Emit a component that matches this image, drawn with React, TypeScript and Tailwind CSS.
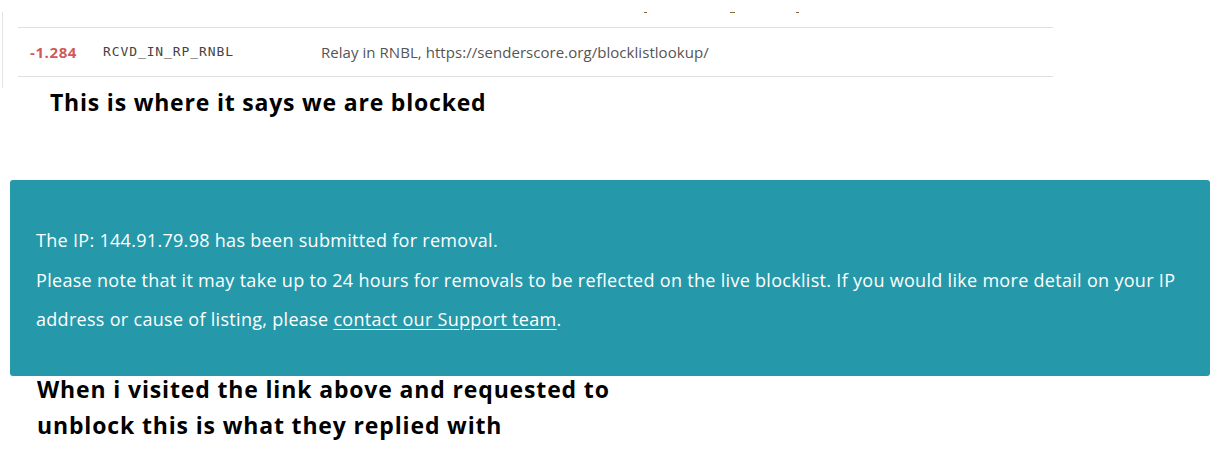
import React from "react";

export default function App() {
  return (
    <div className="w-[1227px] h-[467px] bg-white overflow-hidden relative">
      {/* top table fragment */}
      <div className="ml-[2px] mt-[12px] h-[76px] border-l border-[#e3e3e3] pl-[15px]">
        <div className="relative h-[15px] w-[1035px]">
          <span className="absolute left-[626px] top-0 h-px w-[3px] bg-[#8a6a3a]" />
          <span className="absolute left-[712px] top-0 h-px w-[5px] bg-[#8a6a3a]" />
          <span className="absolute left-[778px] top-0 h-px w-[3px] bg-[#8a6a3a]" />
        </div>
        <div className="w-[1035px] h-[50px] border-t border-b border-[#e0e0e0] flex items-center">
          <span className="w-[85px] pl-[12px] text-[15px] tracking-[0.6px] font-bold text-[#cf5a5a] font-['Open_Sans',sans-serif]">
            -1.284
          </span>
          <span className="w-[218px] text-[13px] tracking-[0.9px] text-[#444] font-['DejaVu_Sans_Mono',monospace]">
            RCVD_IN_RP_RNBL
          </span>
          <span className="text-[15px] tracking-[0.05px] text-[#555] font-['Open_Sans',sans-serif]">
            Relay in RNBL, https://senderscore.org/blocklistlookup/
          </span>
        </div>
      </div>

      <h2 className="ml-[50px] text-[23px] leading-[28px] tracking-[0.8px] font-bold text-black font-['Open_Sans',sans-serif]">
        This is where it says we are blocked
      </h2>

      {/* teal notice */}
      <div className="ml-[10px] mt-[64px] w-[1200px] h-[196px] rounded-[3px] bg-[#2599aa] text-white pl-[26px] pt-[41px] font-['Open_Sans',sans-serif] text-[18px] leading-[39.5px] tracking-[0.3px]">
        <p>The IP: 144.91.79.98 has been submitted for removal.</p>
        <p className="whitespace-nowrap">
          Please note that it may take up to 24 hours for removals to be reflected on the live blocklist. If you would like more detail on your IP
          <br />
          address or cause of listing, please{" "}
          <span className="underline underline-offset-[3px]">contact our Support team</span>.
        </p>
      </div>

      <h2 className="ml-[37px] mt-[-5px] text-[23px] leading-[36px] tracking-[0.85px] font-bold text-black font-['Open_Sans',sans-serif]">
        When i visited the link above and requested to
        <br />
        unblock this is what they replied with
      </h2>
    </div>
  );
}
